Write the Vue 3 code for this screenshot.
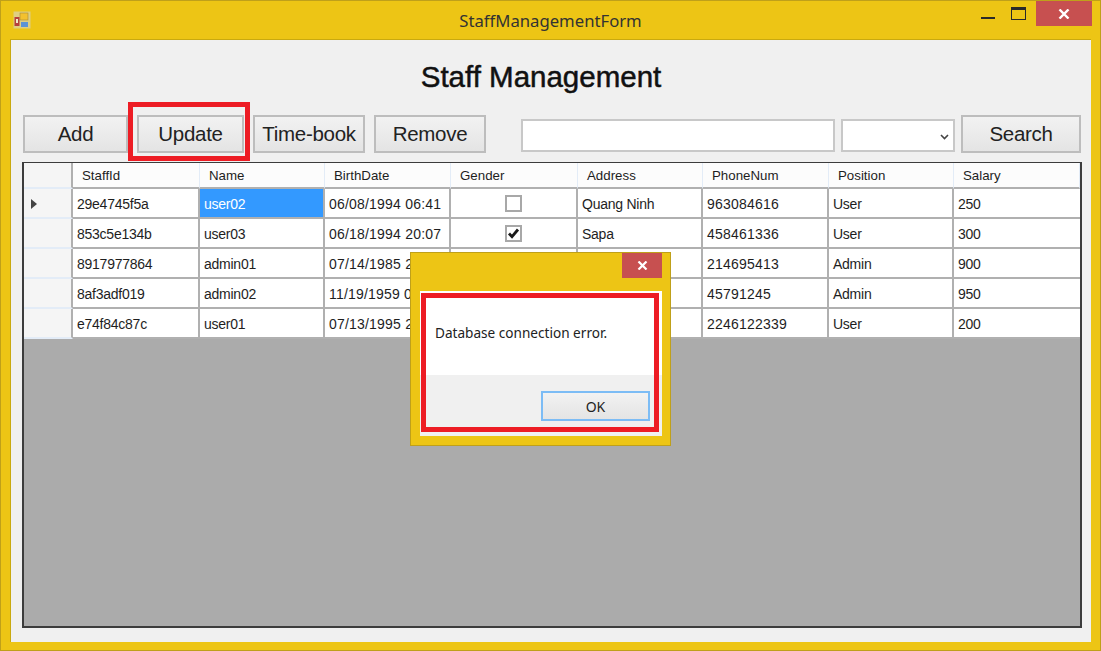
<template>
  <div class="window">
    <div class="titlebar">
      <svg class="app-icon" width="18" height="18" viewBox="0 0 18 18">
        <rect x="0.5" y="0.5" width="17" height="17" fill="#d8d3b0" opacity="0.7" />
        <rect x="7" y="2" width="8" height="7" fill="#f3c12f" stroke="#a88a3a" stroke-width="0.6" />
        <rect x="1.5" y="6" width="5" height="9" fill="#b5403c" />
        <rect x="3" y="8" width="2" height="4" fill="#eec" />
        <rect x="8" y="11" width="7" height="5" fill="#5c93d6" />
      </svg>
      <div class="title">StaffManagementForm</div>
      <div class="controls">
        <div class="ctl"><span class="min"></span></div>
        <div class="ctl"><span class="max"></span></div>
        <div class="close">
          <svg width="12" height="10" viewBox="0 0 12 10"><path d="M1.5 0.5 L10.5 9.5 M10.5 0.5 L1.5 9.5" stroke="#fff" stroke-width="2.4" /></svg>
        </div>
      </div>
    </div>

    <div class="client">
      <h1>Staff Management</h1>
      <div class="toolbar">
        <button class="btn add">Add</button>
        <button class="btn update">Update<span class="mark"></span></button>
        <button class="btn timebook">Time-book</button>
        <button class="btn remove">Remove</button>
        <input class="search-input" type="text" />
        <div class="combo">
          <svg width="9" height="6" viewBox="0 0 9 6"><path d="M1 1 L4.5 4.5 L8 1" fill="none" stroke="#444" stroke-width="1.6" /></svg>
        </div>
        <button class="btn search">Search</button>
      </div>

      <div class="grid">
        <div class="row head">
          <div class="cell rowhead"></div>
          <div v-for="c in columns" :key="c" class="cell">{{ c }}</div>
        </div>
        <div v-for="(s, i) in staff" :key="s.id" class="row">
          <div class="cell rowhead">
            <span v-if="i === 0" class="arrow"></span>
          </div>
          <div class="cell">{{ s.id }}</div>
          <div :class="['cell', { selected: i === 0 }]">{{ s.name }}</div>
          <div class="cell date">{{ s.birth }}</div>
          <div class="cell center">
            <span v-if="i < 2" class="check">
              <svg v-if="s.gender" width="13" height="13" viewBox="0 0 13 13"><path d="M2 6.5 L5 9.6 L11 2.5" fill="none" stroke="#1a1a1a" stroke-width="2.8" /></svg>
            </span>
          </div>
          <div class="cell">{{ s.address }}</div>
          <div class="cell date">{{ s.phone }}</div>
          <div class="cell">{{ s.position }}</div>
          <div class="cell">{{ s.salary }}</div>
        </div>
      </div>
    </div>

    <div class="dialog">
      <div class="dialog-bar">
        <div class="close small">
          <svg width="11" height="9" viewBox="0 0 11 9"><path d="M1.5 0.5 L9.5 8.5 M9.5 0.5 L1.5 8.5" stroke="#fff" stroke-width="2.2" /></svg>
        </div>
      </div>
      <div class="dialog-body">
        <div class="message">Database connection error.</div>
        <div class="dialog-foot">
          <button class="ok">OK</button>
        </div>
        <span class="mark dialog-mark"></span>
      </div>
    </div>
  </div>
</template>

<script setup>
const columns = ['StaffId', 'Name', 'BirthDate', 'Gender', 'Address', 'PhoneNum', 'Position', 'Salary']

// the last three rows sit partly under the dialog, so their address is left out
const staff = [
  { id: '29e4745f5a', name: 'user02', birth: '06/08/1994 06:41', gender: false, address: 'Quang Ninh', phone: '963084616', position: 'User', salary: '250' },
  { id: '853c5e134b', name: 'user03', birth: '06/18/1994 20:07', gender: true, address: 'Sapa', phone: '458461336', position: 'User', salary: '300' },
  { id: '8917977864', name: 'admin01', birth: '07/14/1985 20:07', gender: true, address: '', phone: '214695413', position: 'Admin', salary: '900' },
  { id: '8af3adf019', name: 'admin02', birth: '11/19/1959 01:22', gender: true, address: '', phone: '45791245', position: 'Admin', salary: '950' },
  { id: 'e74f84c87c', name: 'user01', birth: '07/13/1995 20:07', gender: true, address: '', phone: '2246122339', position: 'User', salary: '200' }
]
</script>

<style>
html, body {
  margin: 0;
  background: #edc515;
}
</style>

<style scoped>
.window {
  position: relative;
  box-sizing: border-box;
  width: 1101px;
  height: 651px;
  background: #edc515;
  border: 1px solid #bfa01a;
  padding: 0 9px 8px;
  display: flex;
  flex-direction: column;
  font-family: "Liberation Sans", Arial, sans-serif;
  color: #1a1a1a;
  overflow: hidden;
}

.titlebar {
  height: 38px;
  flex: none;
  display: flex;
  align-items: flex-start;
  position: relative;
}

.app-icon {
  margin: 10px 0 0 3px;
}

.title {
  position: absolute;
  left: 0;
  right: 0;
  top: 10px;
  text-align: center;
  font-family: "Noto Sans", sans-serif;
  font-size: 16.7px;
  line-height: 20px;
  color: #333;
}

.controls {
  margin-left: auto;
  display: flex;
  margin-right: -1px;
  position: relative;
}

.ctl {
  width: 30px;
  height: 25px;
  position: relative;
}

.min {
  position: absolute;
  left: 5px;
  top: 16px;
  width: 14px;
  height: 2px;
  background: #2a2a2a;
}

.max {
  position: absolute;
  left: 5px;
  top: 6px;
  width: 13px;
  height: 9px;
  border: 1px solid #2a2a2a;
  border-top-width: 3px;
}

.close {
  width: 56px;
  height: 25px;
  background: #c75050;
  display: flex;
  align-items: center;
  justify-content: center;
}

.close.small {
  width: 40px;
}

.client {
  flex: 1;
  background: #f0f0f0;
  border: 1px solid #c9a90f;
  border-width: 1px 0 0 1px;
  padding: 0 9px 14px 11px;
  display: flex;
  flex-direction: column;
  min-height: 0;
}

h1 {
  margin: 0;
  height: 75px;
  padding: 21px 22px 0 0;
  box-sizing: border-box;
  text-align: center;
  font-size: 29.5px;
  line-height: 32px;
  font-weight: normal;
  -webkit-text-stroke: 0.5px #111;
  color: #111;
}

.toolbar {
  display: flex;
  align-items: flex-start;
  height: 38px;
  margin: 0 0 9px 1px;
  flex: none;
}

.btn {
  box-sizing: border-box;
  height: 38px;
  border: 2px solid #bdbdbd;
  background: linear-gradient(#f2f2f2, #e4e4e4);
  font-family: "Liberation Sans", Arial, sans-serif;
  font-size: 20.5px;
  letter-spacing: -0.3px;
  color: #222;
  padding: 0;
  position: relative;
}

.add { width: 105px; margin-right: 9px; }
.update { width: 107px; margin-right: 9px; }
.timebook { width: 112px; margin-right: 9px; }
.remove { width: 112px; margin-right: 35px; }
.search { width: 120px; margin-left: 6px; }

.mark {
  position: absolute;
  box-sizing: border-box;
  border: 5px solid #ed1c24;
  pointer-events: none;
}

.update .mark {
  left: -11px;
  right: -8px;
  top: -15px;
  bottom: -10px;
}

.search-input {
  box-sizing: border-box;
  width: 314px;
  height: 33px;
  border: 2px solid #c8c8c8;
  background: #fff;
  margin: 4px 6px 0 0;
  padding: 0;
}

.combo {
  box-sizing: border-box;
  width: 114px;
  height: 33px;
  margin-top: 4px;
  border: 2px solid #c8c8c8;
  background: #fff;
  display: flex;
  align-items: center;
  justify-content: flex-end;
  padding: 2px 4px 0 0;
}

.grid {
  flex: 1;
  box-sizing: border-box;
  border: 2px solid #3c3c3c;
  border-width: 1px 2px 2px 2px;
  background: #ababab;
  min-height: 0;
  width: 1060px;
}

.row {
  display: grid;
  grid-template-columns: 49px 127px 125px 126px 127px 125px 126px 125px 126px;
  height: 30px;
  font-size: 14px;
  color: #1e1e1e;
}

.row.head {
  height: 26px;
  font-size: 13.3px;
}

.cell {
  box-sizing: border-box;
  background: #fff;
  border-right: 2px solid #b0b0b0;
  border-bottom: 2px solid #b0b0b0;
  padding: 1px 0 0 4px;
  display: flex;
  align-items: center;
  white-space: nowrap;
  overflow: hidden;
  letter-spacing: -0.25px;
}

.cell.date {
  letter-spacing: 0.2px;
}

.cell:last-child {
  border-right: 0;
}

.head .cell {
  background: #fcfcfc;
  border-right: 1px solid #e3ecf7;
  border-bottom: 2px solid #b0b0b0;
  padding-left: 9px;
  letter-spacing: 0;
}

.cell.rowhead {
  background: #f5f5f5;
  border-right: 2px solid #b0b0b0;
  border-bottom: 2px solid #e3ecf7;
  padding-left: 7px;
}

.cell.selected {
  background: #3399ff;
  color: #fff;
}

.center {
  justify-content: center;
  padding-left: 0;
}

.check {
  box-sizing: border-box;
  width: 17px;
  height: 17px;
  border: 2px solid #a8a8a8;
  background: #fff;
  display: flex;
  align-items: center;
  justify-content: center;
}

.arrow {
  width: 0;
  height: 0;
  border-left: 6px solid #444;
  border-top: 5px solid transparent;
  border-bottom: 5px solid transparent;
}

.dialog {
  position: absolute;
  left: 409px;
  top: 251px;
  box-sizing: border-box;
  width: 261px;
  height: 194px;
  background: #edc515;
  border: 1px solid #bfa01a;
  display: flex;
  flex-direction: column;
  padding: 0 8px 9px 9px;
}

.dialog-bar {
  height: 38px;
  display: flex;
  justify-content: flex-end;
  flex: none;
}

.dialog-body {
  flex: 1;
  background: #f0f0f0;
  display: flex;
  flex-direction: column;
  position: relative;
}

.message {
  height: 84px;
  flex: none;
  background: #fff;
  box-sizing: border-box;
  padding: 33px 0 0 15px;
  font-family: "Noto Sans", sans-serif;
  font-size: 13.6px;
  line-height: 18px;
  color: #222;
}

.dialog-foot {
  flex: 1;
  display: flex;
  justify-content: flex-end;
  padding: 16px 12px 0 0;
}

.ok {
  box-sizing: border-box;
  width: 109px;
  height: 30px;
  border: 2px solid #7cbcf5;
  background: linear-gradient(#f2f2f2, #e4e4e4);
  font-family: "Noto Sans", sans-serif;
  font-size: 14px;
  color: #222;
  padding: 0;
}

.dialog-mark {
  left: 1px;
  right: 3px;
  top: 2px;
  bottom: 4px;
}
</style>
